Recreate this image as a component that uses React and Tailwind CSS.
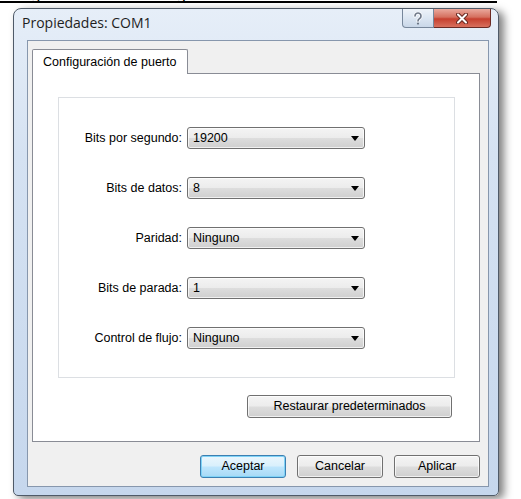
import React from "react";

const rows = [
  { label: "Bits por segundo:", value: "19200" },
  { label: "Bits de datos:", value: "8" },
  { label: "Paridad:", value: "Ninguno" },
  { label: "Bits de parada:", value: "1" },
  { label: "Control de flujo:", value: "Ninguno" },
];

const btnFace =
  "bg-[linear-gradient(#f4f4f4,#ececec_48%,#dddddd_52%,#cfcfcf)] shadow-[inset_0_0_0_1px_rgba(255,255,255,0.7)]";

function DropArrow() {
  return (
    <svg width="8" height="5" viewBox="0 0 8 5">
      <path d="M0 0h8L4 5z" fill="#000" />
    </svg>
  );
}

function ComboBox({ value }) {
  return (
    <div
      className={`flex h-[22px] w-[178px] items-center justify-between rounded-[3px] border border-[#707070] pl-[5px] pr-[5px] ${btnFace}`}
    >
      <span>{value}</span>
      <DropArrow />
    </div>
  );
}

function Button({ children, width, focused }) {
  return (
    <button
      className={`flex h-[23px] ${width} items-center justify-center rounded-[3px] border ${
        focused
          ? "border-[#3c7fb1] bg-[linear-gradient(#eaf6fd,#d9f0fc_48%,#bee6fd_52%,#a7d9f5)] shadow-[inset_0_0_0_1px_#7fd3f7]"
          : `border-[#707070] ${btnFace}`
      }`}
    >
      {children}
    </button>
  );
}

function HelpIcon() {
  return (
    <svg width="10" height="13" viewBox="0 0 10 13">
      <path
        d="M2 4a3 3 0 1 1 4.5 2.6C5.4 7.3 5 8 5 9"
        fill="none"
        stroke="#f7f9fc"
        strokeWidth="3.4"
        strokeLinecap="round"
      />
      <path
        d="M2 4a3 3 0 1 1 4.5 2.6C5.4 7.3 5 8 5 9"
        fill="none"
        stroke="#6c7686"
        strokeWidth="1.6"
        strokeLinecap="round"
      />
      <circle cx="5" cy="11.6" r="1.1" fill="#6c7686" />
    </svg>
  );
}

function CloseIcon() {
  return (
    <svg width="12" height="11" viewBox="0 0 12 11">
      <path d="M2 1.5l8 8M10 1.5l-8 8" stroke="#6a2a22" strokeWidth="4" strokeLinecap="round" />
      <path d="M2 1.5l8 8M10 1.5l-8 8" stroke="#fff" strokeWidth="2" strokeLinecap="round" />
    </svg>
  );
}

export default function App() {
  return (
    <div className="h-[499px] w-[521px] overflow-hidden bg-white font-[family-name:'Liberation_Sans',Arial,sans-serif] text-[12.5px] text-black">
      {/* underlined line of the page behind the dialog */}
      <div className="h-[6px] w-[497px] overflow-hidden">
        <div className="-mt-[13px] flex h-[16px] border-b-2 border-black text-[17px] leading-[16px]">
          <span className="ml-[31px]">g</span>
          <span className="ml-[136px]">g</span>
        </div>
      </div>

      {/* dialog window */}
      <div className="ml-[13px] mt-[2px] flex h-[488px] w-[486px] flex-col rounded-t-[8px] rounded-b-[5px] border border-[#4f5a68] bg-[linear-gradient(#e6eef8,#d5e2f2_30%,#c6d7ed)] shadow-[5px_3px_8px_rgba(0,0,0,0.5)]">
        {/* title bar */}
        <div className="flex h-[31px] justify-between pl-[8px] pr-[7px]">
          <div className="pt-[4px] font-[family-name:'Open_Sans',sans-serif] text-[14px] leading-[20px] text-[#1e1e1e]">
            Propiedades: COM1
          </div>
          <div className="flex h-[19px]">
            <div className="flex w-[32px] items-center justify-center rounded-bl-[4px] border border-t-0 border-[#77879b] bg-[linear-gradient(#eef3f9,#dce6f2_50%,#c9d7e8)]">
              <HelpIcon />
            </div>
            <div className="flex w-[57px] items-center justify-center rounded-br-[4px] border border-l-0 border-t-0 border-[#6b2a24] bg-[linear-gradient(#eaa99d,#d5705f_45%,#c6402f_55%,#d8705e)]">
              <CloseIcon />
            </div>
          </div>
        </div>

        {/* client area */}
        <div className="ml-[13px] flex h-[447px] w-[462px] flex-col border border-[#8797ad] bg-[#f0f0f0] pl-[4px] pr-[8px] pt-[8px]">
          <div className="relative z-10 -mb-px flex h-[25px] w-[156px] items-center whitespace-nowrap rounded-t-[2px] border border-b-0 border-[#898c95] bg-white pl-[10px]">
            Configuración de puerto
          </div>
          <div className="flex h-[369px] w-[448px] flex-col border border-[#898c95] bg-white pl-[25px] pt-[23px]">
            <div className="flex h-[281px] w-[397px] flex-col border border-[#dcdfe3] pt-[29px]">
              <div className="grid grid-cols-[123px_178px] items-center gap-x-[5px] gap-y-[28px]">
                {rows.map((r) => (
                  <React.Fragment key={r.label}>
                    <div className="text-right">{r.label}</div>
                    <ComboBox value={r.value} />
                  </React.Fragment>
                ))}
              </div>
            </div>
            <div className="ml-[189px] mt-[17px]">
              <Button width="w-[205px]">Restaurar predeterminados</Button>
            </div>
          </div>

          <div className="mt-[13px] flex justify-end gap-[11px]">
            <Button width="w-[86px]" focused>
              Aceptar
            </Button>
            <Button width="w-[86px]">Cancelar</Button>
            <Button width="w-[86px]">Aplicar</Button>
          </div>
        </div>
      </div>
    </div>
  );
}
